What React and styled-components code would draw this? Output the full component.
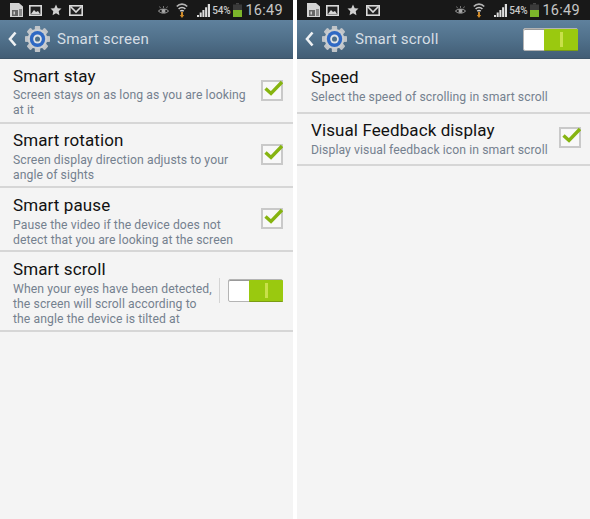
import React from "react";
import styled, { createGlobalStyle } from "styled-components";

const Global = createGlobalStyle`
  html, body { margin: 0; padding: 0; background: #fff; }
  #root { width: 590px; height: 519px; }
`;
const Page = styled.div`
  width: 590px; height: 519px; display: flex; justify-content: space-between;
  font-family: Roboto, "Liberation Sans", sans-serif; overflow: hidden; background: #fff;
`;
const Phone = styled.div`
  width: 293px; height: 519px; display: flex; flex-direction: column; background: #f4f4f4;
`;
const StatusBar = styled.div`
  height: 20px; flex: none; background: #181818; display: flex; align-items: center;
  justify-content: space-between; padding: 0 10px 0 10px; box-sizing: border-box;
`;
const NoticeIcons = styled.div`display: flex; align-items: center;`;
const SysIcons = styled.div`display: flex; align-items: center;`;
const NoticeSlot = styled.span`display: flex; margin-left: ${p => p.$ml}px;`;
const SysSlot = styled.span`display: flex; margin-left: ${p => p.$ml}px;`;
const Percent = styled.span`font-size: 10px; font-weight: 500; color: #c9c9c9; margin: 0 3px 0 2px; letter-spacing: -0.2px;`;
const Clock = styled.span`font-size: 14.5px; color: #c6c6c6; margin-left: 3px; letter-spacing: 0.3px;`;
const Header = styled.div`
  height: 39px; flex: none; box-sizing: border-box; padding: 0 ${p => p.$r}px 0 8px;
  background: linear-gradient(#5f819d, #4f6f89 55%, #425d75);
  display: flex; align-items: center; border-bottom: 1px solid #3d5468;
`;
const Gear = styled.svg`margin-left: 8px; flex: none;`;
const HeaderTitle = styled.span`font-size: 15.1px; color: #d6dee5; margin-left: ${p => p.$ml}px; flex: 1; letter-spacing: 0.2px;`;
const List = styled.div`display: flex; flex-direction: column;`;
const Row = styled.div`
  height: ${p => p.$h}px; box-sizing: border-box; border-bottom: 2px solid #d6d6d6;
  padding: ${p => p.$pt}px 0 0 ${p => p.$pl}px; display: flex; align-items: flex-start;
`;
const RowText = styled.div`flex: 1; min-width: 0;`;
const Title = styled.div`font-size: 17px; line-height: 20px; color: #111; letter-spacing: 0.1px;`;
const Desc = styled.div`font-size: 12.2px; line-height: 15px; color: #75818f; margin-top: ${p => p.$mt}px; white-space: pre-line; letter-spacing: 0.08px;`;
const CheckBox = styled.div`
  width: 22px; height: 21px; box-sizing: border-box; border: 2px solid #c9c9c9; background: #f8f8f8;
  flex: none; margin: ${p => p.$mt}px ${p => p.$mr}px 0 0; position: relative;
`;
const CheckMark = styled.svg`position: absolute; left: -2px; top: -2px;`;
const Divider = styled.div`width: 1px; height: 25px; background: #d4d4d4; flex: none; margin: 19px 8px 0 0;`;
const Toggle = styled.div`
  width: 55px; height: 23px; box-sizing: border-box; flex: none; position: relative;
  margin: ${p => p.$mt || 0}px ${p => p.$mr}px 0 0; background: #fff; border: 1px solid #b4b4b4; border-radius: 2px;
  box-shadow: inset 0 1px 0 #999;
`;
const ToggleOn = styled.div`
  position: absolute; right: -1px; top: 0; bottom: -1px; width: 34px; background: #9ac90f;
  border-bottom: 1px solid #7a9c12; box-sizing: border-box; border-radius: 1px;
  display: flex; align-items: center; justify-content: center;
`;
const ToggleBar = styled.div`width: 3px; height: 15px; background: #c9e04a;`;

const Doc = () => (
  <svg width="14" height="14" viewBox="0 0 14 14"><path d="M0 0h9l4 3.500V14H0z" fill="#d4d4d4"/><path d="M2 7h6v6H2z" fill="#666"/><path d="M9 6h3v7H9z" fill="#8a8a8a"/><path d="M3.500 8.500h1.500v3H3.500z" fill="#ccc"/></svg>
);
const Pic = () => (
  <svg width="13" height="11" viewBox="0 0 13 11"><rect x=".8" y=".8" width="11.400" height="9.400" fill="#222" stroke="#dadada" strokeWidth="1.600"/><path d="M2 9l3-4 2 2 2-1 2 3z" fill="#d8d8d8"/></svg>
);
const Star = () => (
  <svg width="12" height="12" viewBox="0 0 24 24"><path d="M12 1l3.400 7.300 7.600.9-5.600 5.300 1.500 7.900L12 18.500l-6.900 3.900 1.500-7.900L1 9.200l7.600-.9z" fill="#cfcfcf"/></svg>
);
const Mail = () => (
  <svg width="14" height="11" viewBox="0 0 14 11"><rect x=".8" y=".8" width="12.400" height="9.400" fill="#222" stroke="#dadada" strokeWidth="1.600"/><path d="M1.500 1.500L7 7l5.500-5.500" fill="none" stroke="#dadada" strokeWidth="1.600"/></svg>
);
const Eye = () => (
  <svg width="11" height="9" viewBox="0 0 11 9"><path d="M.5 5C2 2.500 9 2.500 10.500 5 9 7.800 2 7.800.5 5z" fill="none" stroke="#a8a8a8"/><circle cx="5.500" cy="5" r="2" fill="#a8a8a8"/><path d="M1.500 .5l1.200 1.800M5.500 0v2M9.500 .5L8.300 2.300" stroke="#808080" strokeWidth=".9"/></svg>
);
const Wifi = () => (
  <svg width="12" height="15" viewBox="0 0 12 15"><path d="M.8 3.500a7 7 0 0 1 10.400 0" fill="none" stroke="#b4b4b4" strokeWidth="1.700"/><path d="M2.600 6a4.600 4.600 0 0 1 6.800 0" fill="none" stroke="#c4c4c4" strokeWidth="1.600"/><path d="M4.300 8.300a2.200 2.200 0 0 1 3.400 0" fill="none" stroke="#d4d4d4" strokeWidth="1.500"/><path d="M5 9h2v3h1.200L6 15l-2.200-3H5z" fill="#d08a28"/></svg>
);
const Signal = () => (
  <svg width="13" height="13" viewBox="0 0 13 13"><path d="M0 13h2v-2H0zM2.700 13h2V8.500h-2zM5.400 13h2V6h-2zM8.100 13h2V3.200h-2zM10.800 13H13V0h-2.200z" fill="#dedede"/></svg>
);
const Battery = () => (
  <svg width="9" height="14" viewBox="0 0 9 14"><path d="M3 0h3v1.500H3z" fill="#444"/><path d="M0 1.500h9V7H0z" fill="#3a3a3a"/><path d="M0 7h9v7H0z" fill="#7cb52a"/></svg>
);
const GearIcon = () => (
  <Gear width="25" height="26" viewBox="0 0 26 26" preserveAspectRatio="none">
    <g fill="#c0c4c8">
      {[0, 45, 90, 135, 180, 225, 270, 315].map(a => (
        <rect key={a} x="10.300" y="0" width="5.400" height="26" rx="1" transform={`rotate(${a} 13 13)`} />
      ))}
    </g>
    <circle cx="13" cy="13" r="10.200" fill="#c9cdd0" />
    <circle cx="13" cy="13" r="8" fill="#2f69c4" />
    <circle cx="13" cy="13" r="4.500" fill="#dfe3e6" />
    <circle cx="13" cy="13" r="2.600" fill="#4d6f8a" />
  </Gear>
);
const Back = () => (
  <svg width="9" height="16" viewBox="0 0 9 16"><path d="M7.500 1.500L2 8l5.500 6.500" fill="none" stroke="#eef1f3" strokeWidth="2.600"/></svg>
);
const Check = ({ mt, mr = 10 }) => (
  <CheckBox $mt={mt} $mr={mr}>
    <CheckMark width="22" height="21" viewBox="0 0 22 21"><path d="M4.500 8.500L10 13.500 21 2" fill="none" stroke="#86b410" strokeWidth="3.400"/></CheckMark>
  </CheckBox>
);
const StatusRow = () => (
  <StatusBar>
    <NoticeIcons>
      <Doc />
      <NoticeSlot $ml={5}><Pic /></NoticeSlot>
      <NoticeSlot $ml={8}><Star /></NoticeSlot>
      <NoticeSlot $ml={7}><Mail /></NoticeSlot>
    </NoticeIcons>
    <SysIcons>
      <Eye />
      <SysSlot $ml={7}><Wifi /></SysSlot>
      <SysSlot $ml={9}><Signal /></SysSlot>
      <Percent>54%</Percent>
      <Battery />
      <Clock>16:49</Clock>
    </SysIcons>
  </StatusBar>
);

export default function App() {
  return (
    <Page>
      <Global />
      <Phone>
        <StatusRow />
        <Header $r={8}>
          <Back /><GearIcon /><HeaderTitle $ml={7}>Smart screen</HeaderTitle>
        </Header>
        <List>
          <Row $h={65} $pt={7} $pl={13}>
            <RowText><Title>Smart stay</Title><Desc $mt={2}>{"Screen stays on as long as you are looking\nat it"}</Desc></RowText>
            <Check mt={14} />
          </Row>
          <Row $h={64} $pt={6} $pl={13}>
            <RowText><Title>Smart rotation</Title><Desc $mt={3}>{"Screen display direction adjusts to your\nangle of sights"}</Desc></RowText>
            <Check mt={14} />
          </Row>
          <Row $h={64} $pt={7} $pl={13}>
            <RowText><Title>Smart pause</Title><Desc $mt={3}>{"Pause the video if the device does not\ndetect that you are looking at the screen"}</Desc></RowText>
            <Check mt={13} />
          </Row>
          <Row $h={80} $pt={7} $pl={13}>
            <RowText><Title>Smart scroll</Title><Desc $mt={3}>{"When your eyes have been detected,\nthe screen will scroll according to\nthe angle the device is tilted at"}</Desc></RowText>
            <Divider />
            <Toggle $mr={10} $mt={20}><ToggleOn><ToggleBar /></ToggleOn></Toggle>
          </Row>
        </List>
      </Phone>
      <Phone>
        <StatusRow />
        <Header $r={12}>
          <Back /><GearIcon /><HeaderTitle $ml={8}>Smart scroll</HeaderTitle>
          <Toggle $mr={0}><ToggleOn><ToggleBar /></ToggleOn></Toggle>
        </Header>
        <List>
          <Row $h={55} $pt={8} $pl={14}>
            <RowText><Title>Speed</Title><Desc $mt={3}>Select the speed of scrolling in smart scroll</Desc></RowText>
          </Row>
          <Row $h={52} $pt={6} $pl={14}>
            <RowText><Title>Visual Feedback display</Title><Desc $mt={3}>Display visual feedback icon in smart scroll</Desc></RowText>
            <Check mt={7} mr={9} />
          </Row>
        </List>
      </Phone>
    </Page>
  );
}
